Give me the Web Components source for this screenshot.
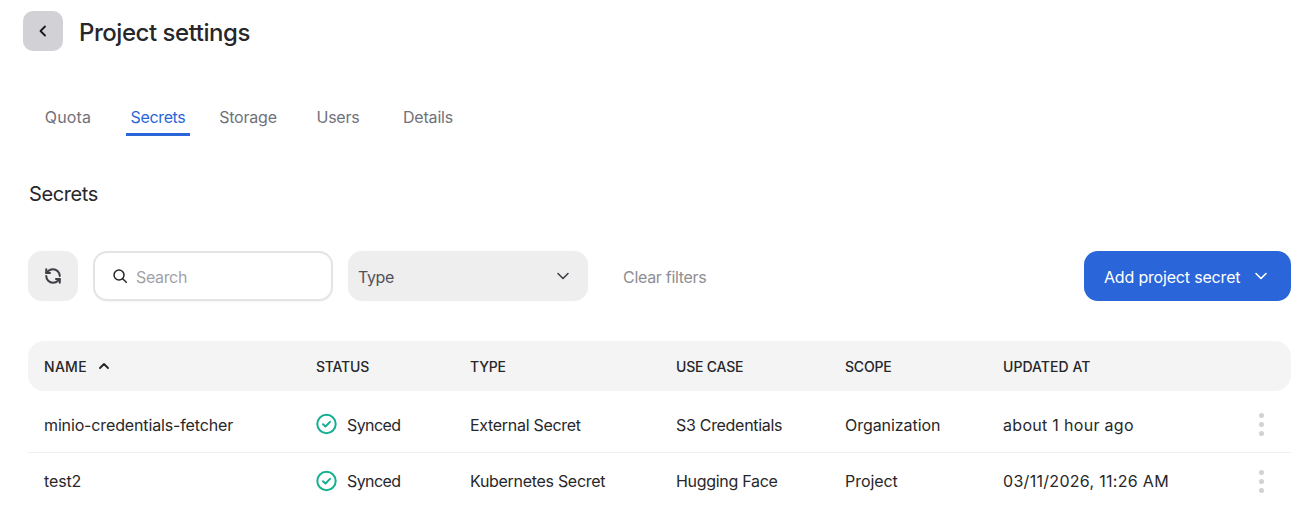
<!DOCTYPE html>
<html lang="en">
<head>
<meta charset="utf-8">
<title>Project settings</title>
<style>
html,body{margin:0;padding:0;background:#fff;overflow:hidden;}
body{font-family:Inter,"Noto Sans",sans-serif;color:#27272a;}
</style>
</head>
<body>
<settings-page></settings-page>

<script>
const CHEVRON_DOWN = `<svg width="16" height="16" viewBox="0 0 16 16" fill="none" stroke="currentColor" stroke-width="1.6" stroke-linecap="round" stroke-linejoin="round"><path d="M3 5.5 8 10.5 13 5.5"/></svg>`;

class PageHeader extends HTMLElement{
  constructor(){
    super();
    this.attachShadow({mode:"open"}).innerHTML = `
<style>
:host{display:flex;align-items:center;gap:16px;padding:11px 0 0 23px;}
.back{width:40px;height:40px;border-radius:10px;background:#d1d1d6;display:flex;align-items:center;justify-content:center;color:#18181b;}
h1{margin:2px 0 -2px;font-size:24px;line-height:40px;font-weight:500;letter-spacing:-.46px;color:#27272a;}
</style>
<div class="back"><svg width="16" height="16" viewBox="0 0 16 16" fill="none" stroke="currentColor" stroke-width="1.8" stroke-linecap="round" stroke-linejoin="round"><path d="M10 3.5 5.5 8l4.5 4.5"/></svg></div>
<h1><slot></slot></h1>`;
  }
}

class TabBar extends HTMLElement{
  constructor(){
    super();
    this.attachShadow({mode:"open"}).innerHTML = `
<style>
:host{display:flex;padding:46px 0 0 23px;height:39px;}
</style>
<slot></slot>`;
  }
}

class TabItem extends HTMLElement{
  constructor(){
    super();
    this.attachShadow({mode:"open"}).innerHTML = `
<style>
:host{display:block;width:90px;height:39px;font-size:16px;letter-spacing:-.2px;color:#71717a;text-align:center;}
:host([active]){color:#2a65d9;}
.label{display:inline-block;box-sizing:border-box;width:64px;height:39px;line-height:40px;white-space:nowrap;}
:host([active]) .label{letter-spacing:-.35px;border-bottom:3px solid #2a65d9;}
</style>
<span class="label"><slot></slot></span>`;
  }
}

class FilterBar extends HTMLElement{
  constructor(){
    super();
    this.attachShadow({mode:"open"}).innerHTML = `
<style>
:host{display:flex;align-items:center;margin:0 6px 0 28px;height:50px;}
.refresh{width:50px;height:50px;border-radius:14px;background:#eeeeef;display:flex;align-items:center;justify-content:center;color:#3f3f46;flex:none;}
.search{box-sizing:border-box;width:240px;height:50px;margin-left:15px;border:2px solid #e4e4e7;border-radius:14px;display:flex;align-items:center;gap:8px;padding-left:17px;color:#a1a1aa;font-size:16px;letter-spacing:-.35px;background:#fff;box-shadow:0 1px 1px rgba(0,0,0,.04);}
.search svg{color:#27272a;flex:none;}
.search span,.select span.t,.clear,.add span.t{padding-top:2px;}
.select{box-sizing:border-box;width:240px;height:50px;margin-left:15px;border-radius:14px;background:#eeeeef;display:flex;align-items:center;justify-content:space-between;padding:0 17px 0 10px;font-size:16px;letter-spacing:-.35px;color:#52525b;}
.clear{margin-left:35px;font-size:16px;letter-spacing:-.3px;color:#8e8e93;}
.add{margin-left:auto;box-sizing:border-box;width:207px;height:50px;border-radius:14px;background:#2a65d9;color:#fff;display:flex;align-items:center;gap:13px;padding-left:20px;font-size:16px;letter-spacing:-.18px;}
</style>
<div class="refresh"><svg width="18" height="18" viewBox="0 0 24 24" fill="none" stroke="currentColor" stroke-width="2.7" stroke-linecap="round" stroke-linejoin="round"><path d="M21 12a9 9 0 0 0-9-9 9.75 9.75 0 0 0-6.74 2.74L3 8"/><path d="M3 3v5h5"/><path d="M3 12a9 9 0 0 0 9 9 9.75 9.75 0 0 0 6.74-2.74L21 16"/><path d="M16 16h5v5"/></svg></div>
<div class="search"><svg width="16" height="16" viewBox="0 0 16 16" fill="none" stroke="currentColor" stroke-width="1.5" stroke-linecap="round"><circle cx="7" cy="7" r="5"/><path d="m10.7 10.7 3.6 3.6"/></svg><span>Search</span></div>
<div class="select"><span class="t">Type</span><span style="display:flex;color:#3f3f46">${CHEVRON_DOWN}</span></div>
<div class="clear">Clear filters</div>
<div class="add"><span class="t">Add project secret</span><span style="display:flex">${CHEVRON_DOWN}</span></div>`;
  }
}

const COLS = "272px 154px 206px 169px 158px 1fr 60px";

class SecretsTable extends HTMLElement{
  constructor(){
    super();
    this.attachShadow({mode:"open"}).innerHTML = `
<style>
:host{display:block;margin:40px 6px 0 28px;}
.head{display:grid;grid-template-columns:${COLS};align-items:center;height:50px;padding-left:16px;margin-bottom:6px;background:#f4f4f5;border-radius:16px;font-size:14px;font-weight:500;color:#27272a;letter-spacing:-.2px;}
.name{display:flex;align-items:center;gap:11px;letter-spacing:.3px;}
.upd{letter-spacing:.05px;}
</style>
<div class="head">
<div class="name">NAME <svg width="12" height="12" viewBox="0 0 12 12" fill="none" stroke="currentColor" stroke-width="1.9" stroke-linecap="round" stroke-linejoin="round"><path d="M2 8 6 4l4 4"/></svg></div>
<div>STATUS</div><div>TYPE</div><div>USE CASE</div><div>SCOPE</div><div class="upd">UPDATED AT</div><div></div>
</div>
<slot></slot>`;
  }
}

class SecretRow extends HTMLElement{
  constructor(){
    super();
    this.attachShadow({mode:"open"});
  }
  connectedCallback(){
    const a = n => this.getAttribute(n) || "";
    this.shadowRoot.innerHTML = `
<style>
:host{display:grid;box-sizing:border-box;grid-template-columns:${COLS};align-items:center;height:56px;padding-left:16px;border-bottom:1px solid #f1f1f2;font-size:16px;letter-spacing:-.3px;color:#27272a;}
:host([last]){border-bottom:none;}
.name{letter-spacing:-.14px;}
.scope{letter-spacing:-.05px;}
.upd{letter-spacing:.3px;}
.status{display:flex;align-items:center;gap:9px;}
.status span{letter-spacing:-.6px;}
.status svg{color:#14b08f;flex:none;margin-left:-1px;}
.more{display:flex;flex-direction:column;gap:4px;align-items:center;justify-self:center;}
.more i{display:block;width:5px;height:5px;border-radius:50%;background:#d1d1d6;}
</style>
<div class="name">${a("name")}</div>
<div class="status"><svg width="23" height="23" viewBox="0 0 23 23" fill="none" stroke="currentColor" stroke-width="2" stroke-linecap="round" stroke-linejoin="round"><circle cx="11.5" cy="11" r="9.2"/><path d="m8 11.2 2.5 2.3 4.5-4.6" stroke-width="2"/></svg><span>Synced</span></div>
<div>${a("kind")}</div>
<div>${a("usecase")}</div>
<div class="scope">${a("scope")}</div>
<div class="upd">${a("updated")}</div>
<div class="more"><i></i><i></i><i></i></div>`;
  }
}

class SettingsPage extends HTMLElement{
  constructor(){
    super();
    this.attachShadow({mode:"open"}).innerHTML = `
<style>
:host{display:block;width:1297px;}
h2{margin:0;padding:44px 0 43px 29px;font-size:20px;line-height:28px;font-weight:400;letter-spacing:-.4px;color:#27272a;}
</style>
<page-header>Project settings</page-header>
<tab-bar>
<tab-item style="letter-spacing:.15px">Quota</tab-item>
<tab-item active>Secrets</tab-item>
<tab-item>Storage</tab-item>
<tab-item>Users</tab-item>
<tab-item>Details</tab-item>
</tab-bar>
<h2>Secrets</h2>
<filter-bar></filter-bar>
<secrets-table>
<secret-row name="minio-credentials-fetcher" kind="External Secret" usecase="S3 Credentials" scope="Organization" updated="about 1 hour ago"></secret-row>
<secret-row last name="test2" kind="Kubernetes Secret" usecase="Hugging Face" scope="Project" updated="03/11/2026, 11:26 AM"></secret-row>
</secrets-table>`;
  }
}

customElements.define("page-header",PageHeader);
customElements.define("tab-bar",TabBar);
customElements.define("tab-item",TabItem);
customElements.define("filter-bar",FilterBar);
customElements.define("secrets-table",SecretsTable);
customElements.define("secret-row",SecretRow);
customElements.define("settings-page",SettingsPage);
</script>
</body>
</html>
